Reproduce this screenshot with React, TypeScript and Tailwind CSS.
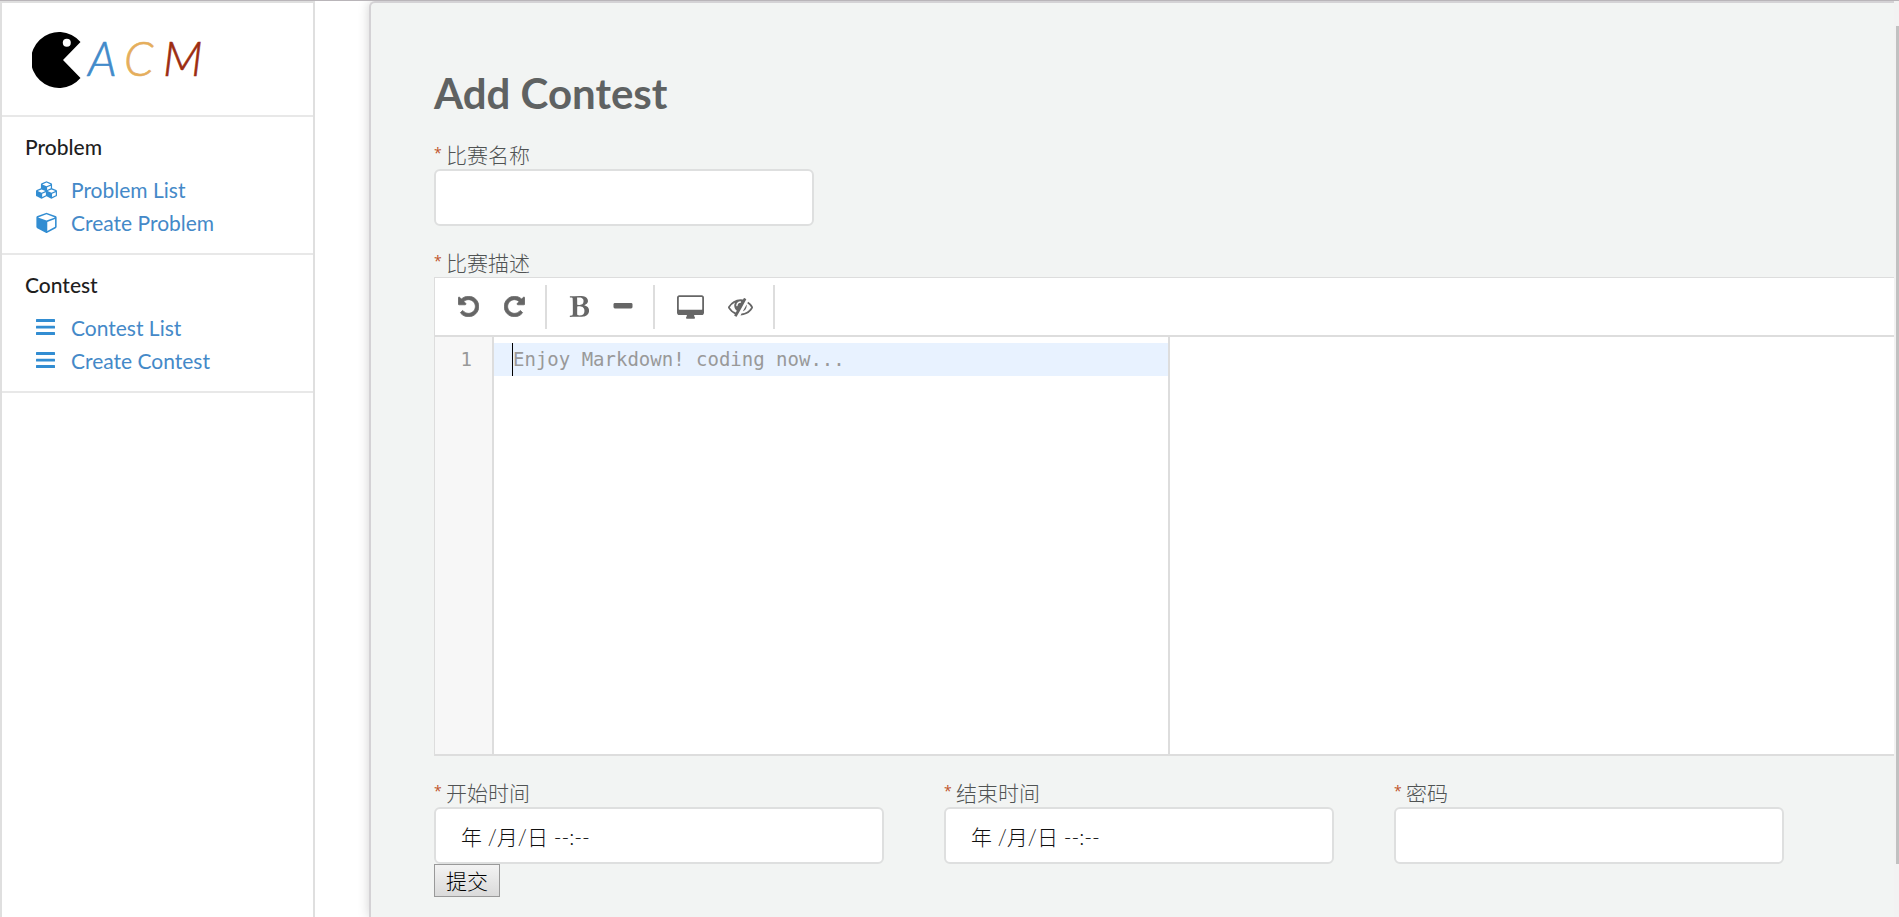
import type { ReactNode } from "react";

type IconProps = { className?: string };

function Glyph({ viewBox, d, className }: { viewBox: string; d: string; className?: string }) {
  return (
    <svg viewBox={viewBox} className={className} fill="currentColor" aria-hidden="true">
      <path d={d} />
    </svg>
  );
}

const CubesIcon = ({ className }: IconProps) => (
  <Glyph
    className={className}
    viewBox="0 0 2176 1792"
    d="M640 1632l384-192v-314l-384 164v342zm-64-454l404-173-404-173-404 173zm1088 454l384-192v-314l-384 164v342zm-64-454l404-173-404-173-404 173zm-448-293l384-165v-266l-384 164v267zm-64-379l441-189-441-189-441 189zm1088 518v416q0 36-19 67t-52 47l-448 224q-25 14-57 14t-57-14l-448-224q-5-2-7-4-2 2-7 4l-448 224q-25 14-57 14t-57-14l-448-224q-33-16-52-47t-19-67v-416q0-38 21.5-70t56.5-48l434-186v-400q0-38 21.5-70t56.5-48l448-192q23-10 50-10t50 10l448 192q35 16 56.5 48t21.5 70v400l434 186q36 16 57 48t21 70z"
  />
);

const CubeIcon = ({ className }: IconProps) => (
  <Glyph
    className={className}
    viewBox="0 64 1664 1728"
    d="M896 1629l640-349v-636l-640 233v752zm-64-865l698-254-698-254-698 254zm832-252v768q0 35-18 65t-49 47l-704 384q-28 16-61 16t-61-16l-704-384q-31-17-49-47t-18-65v-768q0-40 23-73t61-47l704-256q22-8 44-8t44 8l704 256q38 14 61 47t23 73z"
  />
);

const ListIcon = ({ className }: IconProps) => (
  <svg viewBox="0 0 21 21" className={className} fill="currentColor" aria-hidden="true">
    <rect x="0" y="2" width="19" height="3" rx="0.5" />
    <rect x="0" y="8.8" width="19" height="2.6" rx="0.5" />
    <rect x="0" y="15" width="19" height="3" rx="0.5" />
  </svg>
);

const UndoIcon = () => (
  <Glyph
    className="size-[21px] stroke-current stroke-[60]"
    viewBox="112 112 1568 1568"
    d="M1664 896q0 156-61 298t-164 245-245 164-298 61q-172 0-327-72.5t-264-204.5q-7-10-6.5-22.5t8.5-20.5l137-138q10-9 25-9 16 2 23 12 73 95 179 147t225 52q104 0 198.5-40.5t163.5-109.5 109.5-163.5 40.5-198.5-40.5-198.5-109.5-163.5-163.5-109.5-198.5-40.5q-98 0-188 35.5t-160 101.5l137 138q31 30 14 69-17 40-59 40h-448q-26 0-45-19t-19-45v-448q0-42 40-59 39-17 69 14l130 129q107-101 244.5-156.5t284.5-55.5q156 0 298 61t245 164 164 245 61 298z"
  />
);

const RedoIcon = () => (
  <Glyph
    className="size-[21px] stroke-current stroke-[60]"
    viewBox="112 112 1568 1568"
    d="M1664 256v448q0 26-19 45t-45 19h-448q-42 0-59-40-17-39 14-69l138-138q-148-137-349-137-104 0-198.5 40.5t-163.5 109.5-109.5 163.5-40.5 198.5 40.5 198.5 109.5 163.5 163.5 109.5 198.5 40.5q119 0 225-52t179-147q7-10 23-12 15 0 25 9l137 138q9 8 9.5 20.5t-7.5 22.5q-109 132-264 204.5t-327 72.5q-156 0-298-61t-245-164-164-245-61-298 61-298 164-245 245-164 298-61q147 0 284.5 55.5t244.5 156.5l130-129q29-31 70-14 39 17 39 59z"
  />
);

const BoldIcon = () => (
  <Glyph
    className="h-[21px] w-5"
    viewBox="192 128 1344 1536"
    d="M747 1521q74 32 140 32 376 0 376-335 0-114-41-180-27-44-61.5-74t-67.5-46.5-80.5-25-84-10.5-94.5-2q-73 0-101 10 0 53-.5 159t-.5 158q0 8-1 67.5t-.5 96.5 4.5 83.5 12 66.5zm-14-746q42 7 109 7 82 0 143-13t110-44.5 74.5-89.5 25.5-142q0-70-29-122.5t-79-82-108-43.5-124-14q-50 0-130 13 0 50 4 151t4 152q0 27-.5 80t-.5 79q0 46 1 69zm-541 889l2-94q15-4 85-16t106-27q7-12 12.5-27t8.5-33.5 5.5-32.5 3-37.5.5-34v-65.5q0-982-22-1025-4-8-22-14.5t-44.5-11-49.5-7-48.5-4.5-30.5-3l-4-83q98-2 340-11.5t373-9.5q23 0 68 .5t68 .5q70 0 136.5 13t128.5 42 108 71 74 104.5 28 137.5q0 52-16.5 95.5t-39 72-64.5 57.5-73 45-84 40q154 35 256.5 134t102.5 248q0 100-35 179.5t-93.5 130.5-138 85.5-163.5 48.5-176 14q-44 0-132-3t-132-3q-106 0-307 11t-231 12z"
  />
);

const MinusIcon = () => (
  <svg viewBox="0 0 20 21" className="h-[21px] w-5" fill="currentColor" aria-hidden="true">
    <rect x="0.5" y="7" width="19" height="5.4" rx="1.4" />
  </svg>
);

const DesktopIcon = () => (
  <Glyph
    className="h-6 w-[27px]"
    viewBox="-64 0 1920 1664"
    d="M1728 992v-832q0-13-9.5-22.5t-22.5-9.5h-1600q-13 0-22.5 9.5t-9.5 22.5v832q0 13 9.5 22.5t22.5 9.5h1600q13 0 22.5-9.5t9.5-22.5zm128-832v1088q0 66-47 113t-113 47h-544q0 37 16 77.5t32 71 16 43.5q0 26-19 45t-45 19h-512q-26 0-45-19t-19-45q0-14 16-44t32-70 16-78h-544q-66 0-113-47t-47-113v-1088q0-66 47-113t113-47h1600q66 0 113 47t47 113z"
  />
);

const EyeSlashIcon = () => (
  <Glyph
    className="size-[25px]"
    viewBox="0 0 1792 1792"
    d="M555 1335l78-141q-87-63-136-159t-49-203q0-121 61-225-229 117-381 353 167 258 427 375zm389-759q0-20-14-34t-34-14q-125 0-214.5 89.5t-89.5 214.5q0 20 14 34t34 14 34-14 14-34q0-86 61-147t147-61q20 0 34-14t14-34zm363-191q0 7-1 9-106 189-316 567t-315 566l-49 89q-10 16-28 16-12 0-134-70-16-10-16-28 0-12 44-87-143-65-263.5-173t-208.5-245q-20-31-20-69t20-69q153-235 380-371t496-136q89 0 180 17l54-97q10-16 28-16 5 0 18 6t31 15.5 33 18.5 31.5 18.5 19.5 11.5q16 10 16 27zm37 447q0 139-79 253.5t-209 164.5l280-502q8 45 8 84zm448 128q0 35-20 69-39 64-109 145-150 172-347.5 267t-419.5 95l74-132q212-18 392.5-137t301.5-307q-115-179-282-294l63-112q95 64 182.5 153t144.5 184q20 34 20 69z"
  />
);

function Logo() {
  return (
    <svg viewBox="0 -10 200 76" className="h-[76px] w-[200px]" role="img" aria-label="ACM">
      <path d="M31 28 L48.5 10 A28 28 0 1 0 48.5 46 Z" fill="#000" />
      <circle cx="34.8" cy="10.8" r="4" fill="#fff" />
      <g className="font-['Lato'] text-[47px] leading-none font-light italic" strokeWidth="0.6">
        <text x="56" y="44" fill="#428bca" stroke="#428bca">A</text>
        <text x="92" y="44" fill="#e5ae5c" stroke="#e5ae5c">C</text>
        <text x="131" y="44" fill="#9c2c10" stroke="#9c2c10">M</text>
      </g>
    </svg>
  );
}

function NavGroup({ title, children }: { title: string; children: ReactNode }) {
  return (
    <section className="border-b-2 border-[#e8e8e8] pt-[15px] pr-6 pb-3.5 pl-[23px]">
      <h2 className="text-[21px] leading-[30px] font-medium text-[#1f1f1f]">{title}</h2>
      <ul className="mt-[11px]">{children}</ul>
    </section>
  );
}

function NavLink({ icon, children }: { icon: ReactNode; children: ReactNode }) {
  return (
    <li>
      <a href="#" className="flex h-[33px] items-center pl-[11px] text-[21px] leading-[33px] text-[#4489c8]">
        <span className="flex w-[35px] text-[#328dd2]">{icon}</span>
        {children}
      </a>
    </li>
  );
}

function Field({
  id,
  label,
  value,
  type = "text",
  className,
}: {
  id: string;
  label: string;
  value?: string;
  type?: string;
  className: string;
}) {
  return (
    <div className={className}>
      <FieldLabel htmlFor={id}>{label}</FieldLabel>
      <input
        id={id}
        type={type}
        defaultValue={value}
        className="block h-[57px] w-full rounded-md border-2 border-[#dedfdf] bg-white px-[25px] text-[21px] font-light text-[#111] outline-none"
      />
    </div>
  );
}

function FieldLabel({ htmlFor, children }: { htmlFor: string; children: ReactNode }) {
  return (
    <label htmlFor={htmlFor} className="flex h-[31px] text-[21px] leading-[33px] font-light text-[#505353]">
      <span className="w-3 font-['Open_Sans'] text-sm leading-[30px] font-normal text-[#c0532a]">*</span>
      {children}
    </label>
  );
}

function ToolGroup({ className, children }: { className: string; children: ReactNode }) {
  return <div className={`flex h-11 items-center border-r-2 border-[#ddd] ${className}`}>{children}</div>;
}

function Tool({ label, children }: { label: string; children: ReactNode }) {
  return (
    <button type="button" aria-label={label} className="flex items-center text-[#666]">
      {children}
    </button>
  );
}

function MarkdownEditor() {
  return (
    <div className="border-t border-b-2 border-l border-[#ddd] bg-white">
      <div className="flex h-[59px] items-center border-b-2 border-[#ddd]">
        <ToolGroup className="gap-[25px] pr-5 pl-[23px]">
          <Tool label="Undo"><UndoIcon /></Tool>
          <Tool label="Redo"><RedoIcon /></Tool>
        </ToolGroup>
        <ToolGroup className="gap-6 pr-5 pl-[22px]">
          <Tool label="Bold"><BoldIcon /></Tool>
          <Tool label="Horizontal rule"><MinusIcon /></Tool>
        </ToolGroup>
        <ToolGroup className="gap-6 pr-5 pl-[22px]">
          <Tool label="Watch"><DesktopIcon /></Tool>
          <Tool label="Preview"><EyeSlashIcon /></Tool>
        </ToolGroup>
      </div>
      <div className="flex h-[417px] font-['DejaVu_Sans_Mono',monospace] text-[19px] leading-[33px]">
        <div className="w-[59px] shrink-0 border-r-2 border-[#ddd] bg-[#f7f7f7] pt-1.5 pr-5 text-right text-[#999]">1</div>
        <div className="w-[676px] border-r-2 border-[#ddd] pt-1.5">
          <div className="flex bg-[#e8f2ff] pl-[18px]">
            <textarea
              id="description"
              rows={1}
              placeholder="Enjoy Markdown! coding now..."
              className="block h-[33px] w-full resize-none overflow-hidden border-l border-black bg-transparent outline-none placeholder:text-[#999]"
            />
          </div>
        </div>
        <div className="flex-1" />
      </div>
    </div>
  );
}

export default function App() {
  return (
    <div className="flex h-screen overflow-hidden border-t border-[#b9b5b9] bg-white font-['Lato','Noto_Sans_CJK_SC',sans-serif]">
      <nav className="w-[315px] shrink-0 border-2 border-b-0 border-[#dfdfdf]">
        <div className="border-b-2 border-[#e8e8e8] pt-[19px] pb-[17px] pl-[30px]">
          <Logo />
        </div>
        <NavGroup title="Problem">
          <NavLink icon={<CubesIcon className="h-[18px] w-[21px]" />}>Problem List</NavLink>
          <NavLink icon={<CubeIcon className="h-[21px] w-[21px]" />}>Create Problem</NavLink>
        </NavGroup>
        <NavGroup title="Contest">
          <NavLink icon={<ListIcon className="size-[21px]" />}>Contest List</NavLink>
          <NavLink icon={<ListIcon className="size-[21px]" />}>Create Contest</NavLink>
        </NavGroup>
      </nav>

      <main className="ml-[54px] min-w-0 flex-1 rounded-tl-md border-t-2 border-l-2 border-[#d4d2d5] bg-[#f2f4f3] pt-16 pl-[63px] shadow-[0_0_12px_rgba(0,0,0,0.18)]">
        <form>
          <h1 className="text-[42px] leading-[52px] font-bold text-[#5f6262]">Add Contest</h1>
          <Field id="name" label="比赛名称" className="mt-[19px] w-[380px]" />
          <div className="mt-5">
            <FieldLabel htmlFor="description">比赛描述</FieldLabel>
            <MarkdownEditor />
          </div>
          <div className="mt-5 flex gap-[60px]">
            <Field id="start" label="开始时间" value="年 /月/日 --:--" className="w-[450px]" />
            <Field id="end" label="结束时间" value="年 /月/日 --:--" className="w-[390px]" />
            <Field id="password" type="password" label="密码" className="w-[390px]" />
          </div>
          <button
            type="submit"
            className="block h-[33px] w-[66px] border border-[#999] bg-linear-to-b from-[#f3f3f3] to-[#dadada] text-[21px] leading-[30px] font-light text-black"
          >
            提交
          </button>
        </form>
      </main>

      <div className="flex w-[5px] shrink-0 justify-end bg-[#f2f2f2] pt-[25px]" aria-hidden="true">
        <div className="h-[94%] w-[3px] bg-[#c1c1c1]" />
      </div>
    </div>
  );
}
